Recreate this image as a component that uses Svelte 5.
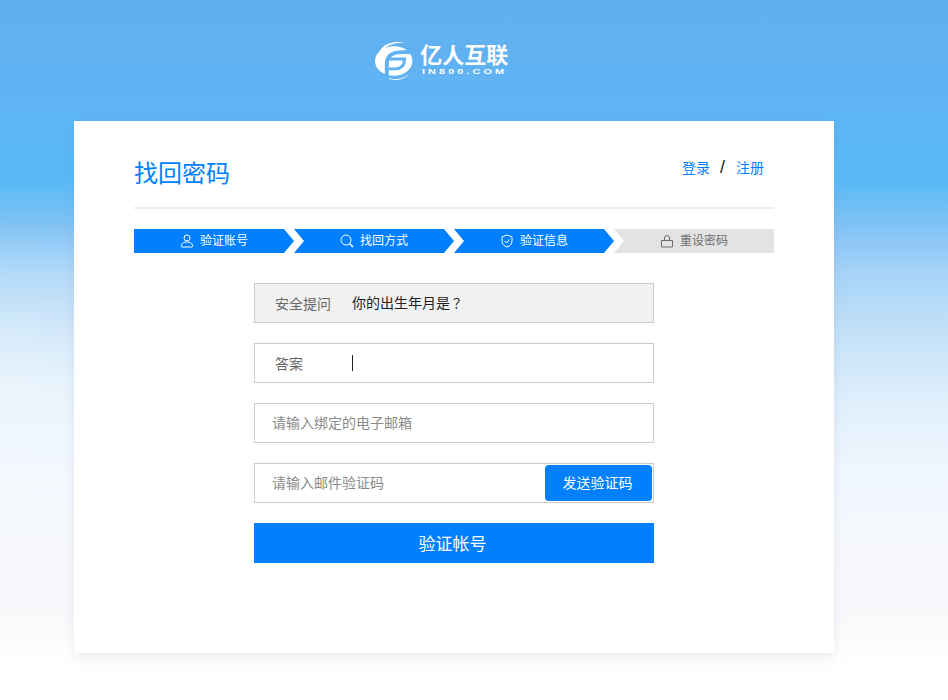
<script>
  const steps = [
    { label: "验证账号", icon: "user", on: true },
    { label: "找回方式", icon: "search", on: true },
    { label: "验证信息", icon: "shield", on: true },
    { label: "重设密码", icon: "lock", on: false }
  ];
</script>

<div class="page">
  <div class="logo">
    <svg width="42" height="42" viewBox="0 0 42 42" fill="none">
      <path d="M4 15C7 5 18-1 33 3 22 1 11 5 4 15z" fill="#fff" />
      <path d="M11 36c7 5 17 5 25-2-6 7-18 9-25 2z" fill="#fff" />
      <ellipse cx="20" cy="21" rx="19" ry="15" fill="#fff" />
      <path d="M13 39V24c0-9 7-12 15-12h11" stroke="#5fb2f3" stroke-width="4" />
      <path d="M15 19h16c0 7-4 10-9 10h-7" stroke="#5fb2f3" stroke-width="3" />
    </svg>
    <div class="brand">
      <div class="cn">亿人互联</div>
      <div class="en">IN800.COM</div>
    </div>
  </div>

  <div class="card">
    <div class="head">
      <h1>找回密码</h1>
      <div class="links"><span>登录</span><i>/</i><span>注册</span></div>
    </div>

    <div class="steps">
      {#each steps as s, i}
        <div class="step" class:on={s.on} class:first={i === 0} class:last={i === 3}>
          <svg class="ic" width="14" height="14" viewBox="0 0 14 14" fill="none" stroke="currentColor" stroke-width="1">
            {#if s.icon === "user"}
              <circle cx="7" cy="4" r="3" />
              <path d="M1.800 13c-.6-.4-.5-1.200-.3-2 .6-2 2.500-3 5.500-3s4.900 1 5.500 3c.2.800.3 1.600-.3 2z" />
            {:else if s.icon === "search"}
              <circle cx="6" cy="6" r="5" />
              <path d="M9.500 9.500L13 13" stroke-width="1.500" />
            {:else if s.icon === "shield"}
              <path d="M7 1l5 1.800v4.200c0 3-2 5-5 6-3-1-5-3-5-6V2.800z" />
              <path d="M4.500 7l2 2 3-3.500" />
            {:else}
              <path d="M1.500 13V6.500h11V13z" />
              <path d="M4.500 6.500V4a2.500 2.500 0 0 1 5 0v2.500" />
            {/if}
          </svg>
          <span class="lbl">{s.label}</span>
        </div>
      {/each}
    </div>

    <form class="form">
      <div class="row readonly">
        <label for="q">安全提问</label>
        <span id="q" class="value">你的出生年月是<span class="qm">？</span></span>
      </div>
      <div class="row">
        <label for="a">答案</label>
        <span id="a" class="caret"></span>
      </div>
      <div class="row">
        <span class="ph">请输入绑定的电子邮箱</span>
      </div>
      <div class="row code">
        <span class="ph">请输入邮件验证码</span>
        <button type="button" class="send">发送验证码</button>
      </div>
      <button type="button" class="submit">验证帐号</button>
    </form>
  </div>
</div>

<style>
  :global(body) {
    margin: 0;
  }

  .page {
    height: 700px;
    overflow: hidden;
    box-sizing: border-box;
    padding-top: 40px;
    font-family: "Liberation Sans", "Noto Sans CJK SC", sans-serif;
    background:
      radial-gradient(ellipse 420px 170px at 0 390px, rgba(255, 255, 255, 0.45), rgba(255, 255, 255, 0)),
      linear-gradient(180deg, #62aeee 0, #60b4f4 100px, #57baf6 180px, #80c2f5 224px, #a4d2f7 270px, #c5e2f8 336px, #e0effb 403px, #eff6fe 470px, #f8f9fd 560px, #f9f9fc 620px, #fefefe 650px, #fff 700px);
  }

  .logo {
    display: flex;
    gap: 5px;
    width: 135px;
    height: 42px;
    margin-left: 374px;
    color: #fff;
  }

  .brand {
    width: 90px;
    padding-top: 4px;
  }

  .cn {
    font-size: 22px;
    line-height: 24px;
    font-weight: 700;
    white-space: nowrap;
  }

  .en {
    margin-left: 2px;
    font-size: 7px;
    line-height: 8px;
    font-weight: 700;
    letter-spacing: 2px;
    white-space: nowrap;
    transform: scaleX(1.55);
    transform-origin: left;
  }

  .card {
    box-sizing: border-box;
    width: 760px;
    height: 532px;
    margin: 39px 0 0 74px;
    padding: 0 60px;
    background: #fff;
    box-shadow: 0 4px 10px rgba(120, 130, 160, 0.14);
  }

  .head {
    display: flex;
    justify-content: space-between;
    height: 86px;
    border-bottom: 2px solid #eeeeee;
  }

  h1 {
    margin: 37px 0 0;
    font-size: 24px;
    line-height: 32px;
    font-weight: 400;
    color: #0080ff;
  }

  .links {
    display: flex;
    align-items: center;
    height: 20px;
    margin: 36px 10px 0 0;
    font-size: 14px;
    color: #0080ff;
  }

  .links i {
    margin: 0 11px 0 10px;
    font-style: normal;
    font-size: 18px;
    color: #222;
  }

  .steps {
    display: flex;
    margin-top: 20px;
    height: 24px;
  }

  .step {
    display: flex;
    flex: 0 0 160px;
    align-items: center;
    justify-content: center;
    gap: 6px;
    box-sizing: border-box;
    font-size: 12px;
    color: #6c6c6c;
    background: #e3e3e3;
    clip-path: polygon(0 0, 150px 0, 160px 12px, 150px 24px, 0 24px, 10px 12px);
  }

  .lbl {
    padding-bottom: 3px;
  }

  .step.on {
    color: #fff;
    background: #0080ff;
  }

  .step.first {
    clip-path: polygon(0 0, 150px 0, 160px 12px, 150px 24px, 0 24px);
  }

  .step.last {
    clip-path: polygon(0 0, 160px 0, 160px 24px, 0 24px, 10px 12px);
  }

  .ic {
    flex: none;
  }

  .form {
    display: flex;
    flex-direction: column;
    gap: 20px;
    width: 400px;
    margin: 30px auto 0;
  }

  .row {
    display: flex;
    align-items: center;
    box-sizing: border-box;
    height: 40px;
    padding-left: 18px;
    border: 1px solid #cccccc;
    font-size: 14px;
    color: #555;
  }

  .row label {
    width: 79px;
    padding-left: 2px;
    box-sizing: border-box;
    color: #666;
  }

  .readonly {
    background: #f1f1f1;
  }

  .value {
    padding-bottom: 2px;
    color: #222;
  }

  .qm {
    font-size: 13px;
    font-family: "Noto Sans CJK TC", sans-serif;
  }

  .caret {
    width: 1px;
    height: 16px;
    background: #222;
  }

  .ph {
    margin-left: -1px;
    padding-bottom: 2px;
    color: #8a8a8a;
  }

  .code {
    justify-content: space-between;
    padding-right: 1px;
  }

  .send {
    width: 107px;
    height: 36px;
    padding: 0 2px 2px 0;
    border: 0;
    border-radius: 4px;
    font: inherit;
    color: #fff;
    background: #0080ff;
  }

  .submit {
    height: 40px;
    padding: 0 3px 2px 0;
    border: 0;
    font-family: inherit;
    font-size: 17px;
    color: #fff;
    background: #0080ff;
  }
</style>
